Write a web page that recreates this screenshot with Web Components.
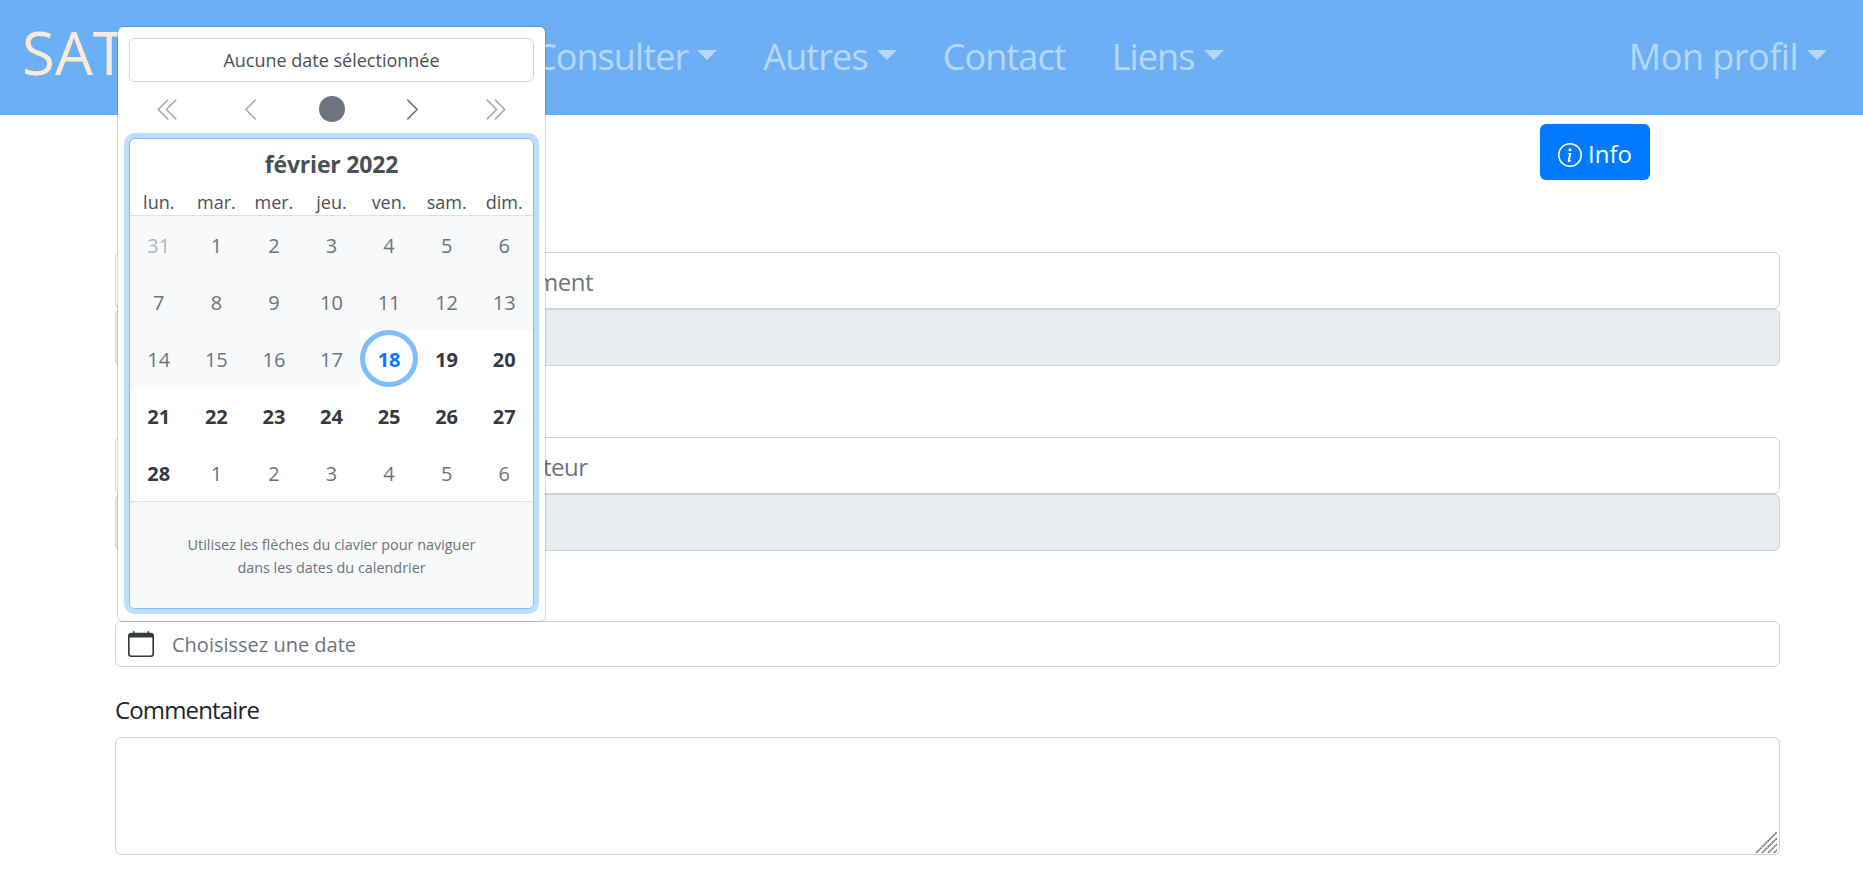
<!DOCTYPE html>
<html lang="fr">
<head>
<meta charset="utf-8">
<title>SAT</title>
<style>
  html, body { margin: 0; padding: 0; background: #fff; }
  body {
    font-family: "Open Sans", "Noto Sans", sans-serif;
    font-size: 24px;
    line-height: 1.5;
    color: #212529;
  }
</style>
</head>
<body>
<sat-app>
  <sat-navbar brand="SAT">
    <sat-nav-link caret>Consulter</sat-nav-link>
    <sat-nav-link caret>Autres</sat-nav-link>
    <sat-nav-link>Contact</sat-nav-link>
    <sat-nav-link caret>Liens</sat-nav-link>
    <sat-nav-link slot="right" caret style="letter-spacing: -.5px">Mon profil</sat-nav-link>
  </sat-navbar>
  <sat-info-button>Info</sat-info-button>
  <sat-field-pair inset="420">ment</sat-field-pair>
  <sat-field-pair inset="427" style="margin-top: 71px">teur</sat-field-pair>
  <sat-date-field>Choisissez une date</sat-date-field>
  <sat-comment-field>Commentaire</sat-comment-field>
  <sat-datepicker slot="overlay"></sat-datepicker>
</sat-app>

<script>
  const icons = {
    chevronLeft: '<path d="M11.354 1.646a.5.5 0 0 1 0 .708L5.707 8l5.647 5.646a.5.5 0 0 1-.708.708l-6-6a.5.5 0 0 1 0-.708l6-6a.5.5 0 0 1 .708 0z"/>',
    chevronDouble: '<path transform="translate(-1.2 0)" d="M8.354 1.646a.5.5 0 0 1 0 .708L2.707 8l5.647 5.646a.5.5 0 0 1-.708.708l-6-6a.5.5 0 0 1 0-.708l6-6a.5.5 0 0 1 .708 0z"/><path d="M12.354 1.646a.5.5 0 0 1 0 .708L6.707 8l5.647 5.646a.5.5 0 0 1-.708.708l-6-6a.5.5 0 0 1 0-.708l6-6a.5.5 0 0 1 .708 0z"/>',
    calendar: '<path d="M3.5 0a.5.5 0 0 1 .5.5V1h8V.5a.5.5 0 0 1 1 0V1h1a2 2 0 0 1 2 2v11a2 2 0 0 1-2 2H2a2 2 0 0 1-2-2V3a2 2 0 0 1 2-2h1V.5a.5.5 0 0 1 .5-.5zM1 4v10a1 1 0 0 0 1 1h12a1 1 0 0 0 1-1V4H1z"/>',
    info: '<path d="M8 15A7 7 0 1 1 8 1a7 7 0 0 1 0 14zm0 1A8 8 0 1 0 8 0a8 8 0 0 0 0 16z"/><path d="m8.93 6.588-2.29.287-.082.38.45.083c.294.07.352.176.288.469l-.738 3.468c-.194.897.105 1.319.808 1.319.545 0 1.178-.252 1.465-.598l.088-.416c-.2.176-.492.246-.686.246-.275 0-.375-.193-.304-.533L8.93 6.588zM9 4.5a1 1 0 1 1-2 0 1 1 0 0 1 2 0z"/>'
  };

  function svgIcon(name, size, extra) {
    return `<svg viewBox="0 0 16 16" width="${size}" height="${size}" fill="currentColor" ${extra || ''}>${icons[name]}</svg>`;
  }

  class SatApp extends HTMLElement {
    constructor() {
      super();
      this.attachShadow({ mode: 'open' });
      this.shadowRoot.innerHTML = `
        <style>
          :host { display: block; position: relative; height: 872px; overflow: hidden; }
          main { display: flex; flex-direction: column; padding: 9px 83px 0 115px; }
          ::slotted(sat-datepicker) { position: absolute; left: 117px; top: 26px; }
        </style>
        <slot name="nav"></slot>
        <main><slot></slot></main>
        <slot name="overlay"></slot>
      `;
      this.querySelector('sat-navbar').slot = 'nav';
    }
  }
  customElements.define('sat-app', SatApp);

  class SatNavbar extends HTMLElement {
    constructor() {
      super();
      this.attachShadow({ mode: 'open' });
      this.shadowRoot.innerHTML = `
        <style>
          :host { display: flex; align-items: center; height: 115px; padding: 0 36px 0 22px; background: #6cafF5; }
          .brand { font-size: 60px; line-height: 1; color: #faebd7; padding-bottom: 12px; }
          .links { display: flex; gap: 46px; margin-left: 408px; }
          .right { display: flex; margin-left: auto; }
        </style>
        <span class="brand">${this.getAttribute('brand')}</span>
        <div class="links"><slot></slot></div>
        <div class="right"><slot name="right"></slot></div>
      `;
    }
  }
  customElements.define('sat-navbar', SatNavbar);

  class SatNavLink extends HTMLElement {
    constructor() {
      super();
      this.attachShadow({ mode: 'open' });
      this.shadowRoot.innerHTML = `
        <style>
          :host { display: flex; align-items: center; padding-bottom: 2px; font-size: 36px; letter-spacing: -.9px; line-height: 54px; color: #b6d7fa; white-space: nowrap; }
          .caret { width: 0; height: 0; margin: -4px 0 0 9px; border-top: 10.8px solid currentColor; border-left: 10.8px solid transparent; border-right: 10.8px solid transparent; }
        </style>
        <slot></slot>
        ${this.hasAttribute('caret') ? '<span class="caret"></span>' : ''}
      `;
    }
  }
  customElements.define('sat-nav-link', SatNavLink);

  class SatInfoButton extends HTMLElement {
    constructor() {
      super();
      this.attachShadow({ mode: 'open' });
      this.shadowRoot.innerHTML = `
        <style>
          :host { display: flex; justify-content: flex-end; padding-right: 130px; }
          button {
            display: flex; align-items: center; gap: 6px; height: 56px; padding: 3px 18px 0;
            border: 0; border-radius: 6px; background: #007bff; color: #fff;
            font: inherit;
          }
          svg { margin-top: 3px; }
        </style>
        <button>${svgIcon('info', 24)}<slot></slot></button>
      `;
    }
  }
  customElements.define('sat-info-button', SatInfoButton);

  // champ de saisie + champ grise en dessous, le debut du texte est cache par le calendrier
  class SatFieldPair extends HTMLElement {
    constructor() {
      super();
      this.attachShadow({ mode: 'open' });
      const inset = this.getAttribute('inset');
      this.shadowRoot.innerHTML = `
        <style>
          :host { display: flex; flex-direction: column; margin-top: 72px; }
          div { box-sizing: border-box; height: 57px; border: 1px solid #ced4da; border-radius: 6px; }
          .text { padding: 11px 18px 0 ${inset}px; color: #6c757d; letter-spacing: -.5px; line-height: 36px; }
          .disabled { background: #e9ecef; }
        </style>
        <div class="text"><slot></slot></div>
        <div class="disabled"></div>
      `;
    }
  }
  customElements.define('sat-field-pair', SatFieldPair);

  class SatDateField extends HTMLElement {
    constructor() {
      super();
      this.attachShadow({ mode: 'open' });
      this.shadowRoot.innerHTML = `
        <style>
          :host {
            display: flex; align-items: center; gap: 18px; box-sizing: border-box; height: 46px; margin-top: 70px;
            padding-left: 12px; border: 1px solid #ced4da; border-radius: 6px; color: #6c757d; font-size: 20px;
          }
          svg { color: #343a40; }
          span { padding-top: 2px; }
        </style>
        ${svgIcon('calendar', 26)}<span><slot></slot></span>
      `;
    }
  }
  customElements.define('sat-date-field', SatDateField);

  class SatCommentField extends HTMLElement {
    constructor() {
      super();
      this.attachShadow({ mode: 'open' });
      this.shadowRoot.innerHTML = `
        <style>
          :host { display: flex; flex-direction: column; margin-top: 25px; }
          label { line-height: 36px; margin-bottom: 9px; letter-spacing: -.85px; }
          .box { position: relative; }
          textarea {
            display: block; box-sizing: border-box; width: 100%; height: 118px; margin: 0; padding: 9px 18px;
            border: 1px solid #ced4da; border-radius: 6px; font: inherit; outline: none; resize: none;
          }
          svg { position: absolute; right: 3px; bottom: 2px; }
        </style>
        <label><slot></slot></label>
        <div class="box">
          <textarea></textarea>
          <svg width="21" height="21" viewBox="0 0 21 21" stroke="#777" stroke-width="1.7" stroke-dasharray="2.2 .5">
            <line x1="0" y1="21" x2="21" y2="0"/>
            <line x1="6" y1="21" x2="21" y2="6"/>
            <line x1="12" y1="21" x2="21" y2="12"/>
            <line x1="18" y1="21" x2="21" y2="18"/>
          </svg>
        </div>
      `;
    }
  }
  customElements.define('sat-comment-field', SatCommentField);

  class SatCalendarNav extends HTMLElement {
    constructor() {
      super();
      this.attachShadow({ mode: 'open' });
      this.shadowRoot.innerHTML = `
        <style>
          :host { display: grid; grid-template-columns: repeat(5, 1fr); align-items: center; justify-items: center; height: 54px; color: #6c757d; }
          svg { display: block; }
          .off { opacity: .6; }
          .flip { transform: scaleX(-1); }
          .today { width: 26px; height: 26px; border-radius: 50%; background: #6c757d; }
        </style>
        ${svgIcon('chevronDouble', 25, 'class="off"')}
        ${svgIcon('chevronLeft', 25, 'class="off"')}
        <span class="today"></span>
        ${svgIcon('chevronLeft', 25, 'class="flip"')}
        ${svgIcon('chevronDouble', 25, 'class="flip off"')}
      `;
    }
  }
  customElements.define('sat-calendar-nav', SatCalendarNav);

  class SatCalendar extends HTMLElement {
    constructor() {
      super();
      this.attachShadow({ mode: 'open' });
      const weekdays = ['lun.', 'mar.', 'mer.', 'jeu.', 'ven.', 'sam.', 'dim.'];
      const days = [31];
      for (let d = 1; d <= 28; d++) days.push(d);
      for (let d = 1; d <= 6; d++) days.push(d);

      const cells = days.map((d, i) => {
        let cls = 'day';
        if (i === 0) cls += ' faded';
        if (i < 18) cls += ' past';
        if (i === 18) cls += ' today';
        if (i > 18 && i < 29) cls += ' open';
        return `<div class="${cls}"><span>${d}</span></div>`;
      }).join('');

      this.shadowRoot.innerHTML = `
        <style>
          :host {
            display: block; margin-top: 2px; border: 1px solid #80bdff; border-radius: 6px;
            box-shadow: 0 0 0 5px rgba(0, 123, 255, .25); background: #fff; color: #495057;
          }
          .month { height: 50px; line-height: 50px; text-align: center; font-size: 23px; font-weight: 700; letter-spacing: -.2px; }
          .weekdays { display: grid; grid-template-columns: repeat(7, 1fr); height: 26px; line-height: 26px; border-bottom: 1px solid #dee2e6; text-align: center; font-size: 18px; }
          .grid { display: grid; grid-template-columns: repeat(7, 1fr); grid-auto-rows: 57px; border-bottom: 1px solid #dee2e6; }
          .day { display: flex; align-items: center; justify-content: center; font-size: 20px; color: #6c757d; }
          .day span { margin-top: 3px; }
          .past { background: #f8f9fa; }
          .faded { color: #adb5bd; }
          .open { color: #343a40; font-weight: 700; }
          .today { box-sizing: border-box; border: 5px solid #80bdff; border-radius: 50%; color: #007bff; font-weight: 700; }
          .help { box-sizing: border-box; height: 106px; padding: 31px 40px 0; border-radius: 0 0 5px 5px; background: #f8f9fa; color: #6c757d; font-size: 14.4px; line-height: 23px; text-align: center; }
        </style>
        <div class="month">février 2022</div>
        <div class="weekdays">${weekdays.map(w => `<span>${w}</span>`).join('')}</div>
        <div class="grid">${cells}</div>
        <div class="help">Utilisez les flèches du clavier pour naviguer<br>dans les dates du calendrier</div>
      `;
    }
  }
  customElements.define('sat-calendar', SatCalendar);

  class SatDatepicker extends HTMLElement {
    constructor() {
      super();
      this.attachShadow({ mode: 'open' });
      this.shadowRoot.innerHTML = `
        <style>
          :host {
            display: block; box-sizing: border-box; width: 429px; padding: 11px 11px 12px;
            border: 1px solid rgba(0, 0, 0, .15); border-radius: 6px; background: #fff; background-clip: padding-box;
          }
          output { display: block; box-sizing: border-box; height: 44px; line-height: 42px; border: 1px solid #ced4da; border-radius: 6px; text-align: center; font-size: 18px; color: #495057; }
        </style>
        <output>Aucune date sélectionnée</output>
        <sat-calendar-nav></sat-calendar-nav>
        <sat-calendar></sat-calendar>
      `;
    }
  }
  customElements.define('sat-datepicker', SatDatepicker);
</script>
</body>
</html>
